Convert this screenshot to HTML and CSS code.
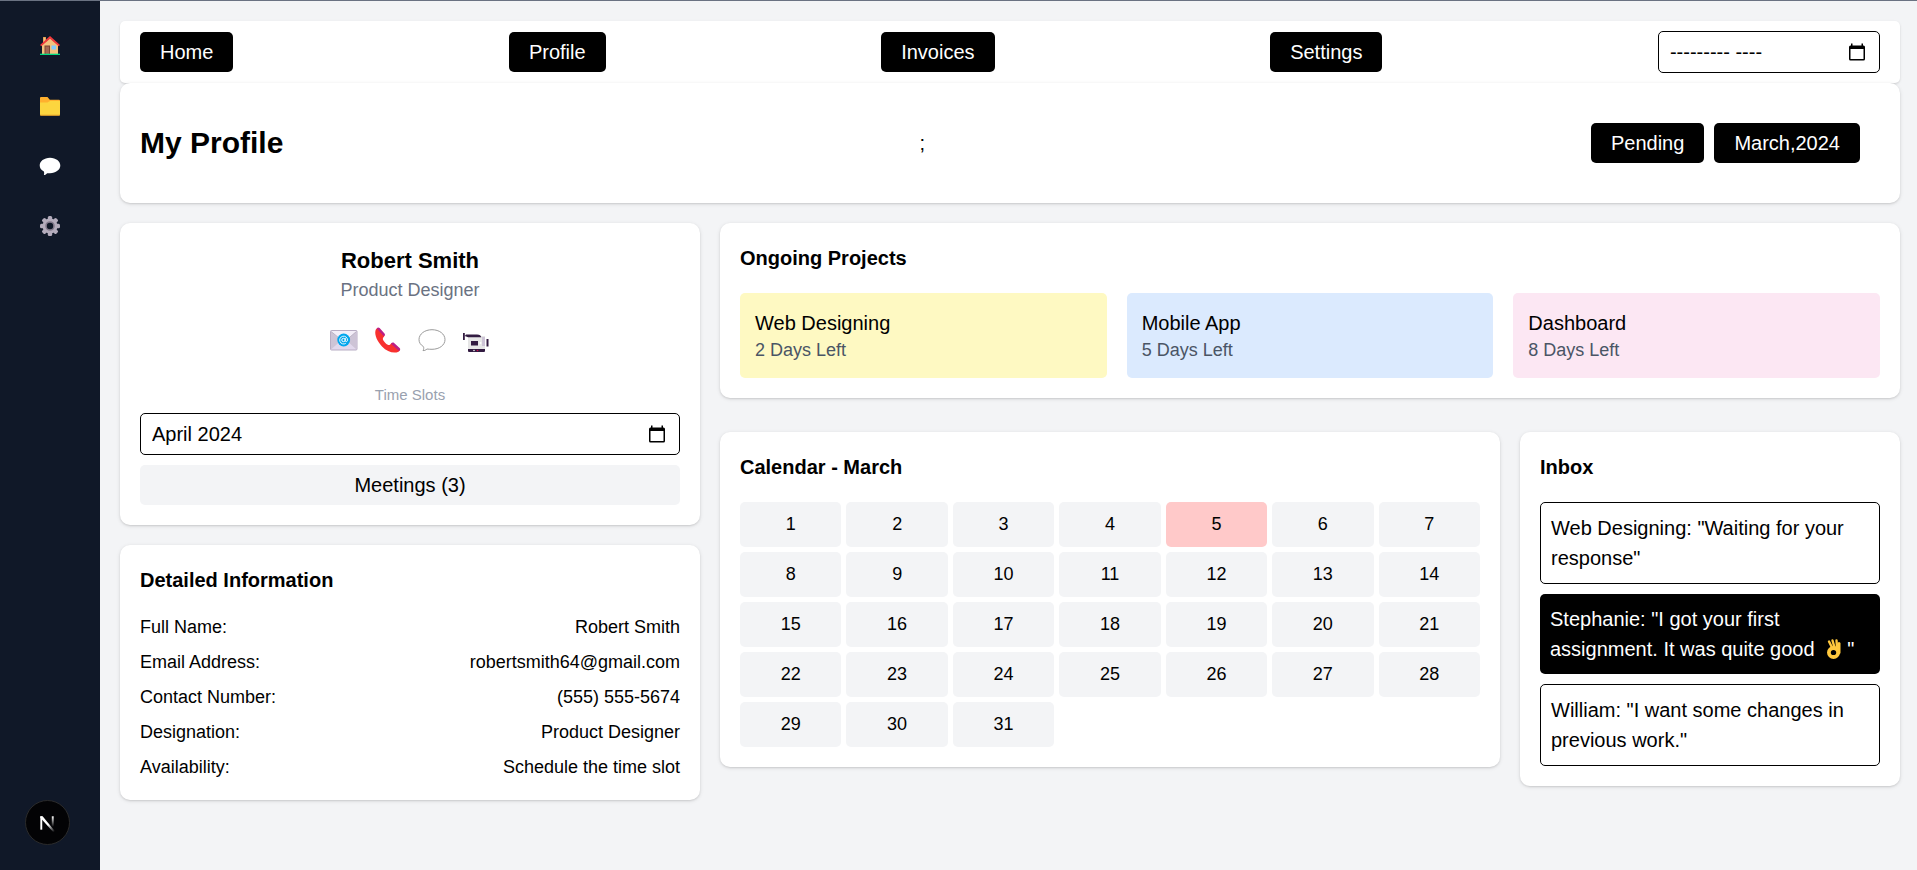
FILE: index.html
```html
<!DOCTYPE html>
<html lang="en">
<head>
<meta charset="utf-8">
<meta name="viewport" content="width=device-width, initial-scale=1">
<title>My Profile</title>
<link rel="stylesheet" href="styles.css">
</head>
<body>
<div class="app">
  <aside class="sidebar">
    <a class="side-link" href="#" aria-label="Home">
      <svg viewBox="0 0 20 20"><path fill="#d3883e" d="M3 1h3v6H3z"/><path fill="#f3c27e" d="M3.500 1.500h2V8h-2zM2 9l8-7 8 7v9H2z"/><path fill="#f23a3c" d="M10 0l10 9-1.300 1.300L10 2.800 1.300 10.300 0 9z"/><path fill="#7d4533" d="M4.500 9.500H10V18H4.500z"/><path fill="#a56953" d="M5.500 10.500H9V18H5.500z"/><path fill="#83cbff" d="M11.500 9.500H16v4h-4.500z"/><path fill="#00dc82" d="M0 17.700h20v1.300H0z"/></svg>
    </a>
    <a class="side-link" href="#" aria-label="Projects">
      <svg viewBox="0 0 20 20"><path fill="#ffb02e" d="M0 2a1 1 0 0 1 1-1h6.500L9.800 3.800H19a1 1 0 0 1 1 1V8H0z"/><path fill="#fcd53f" d="M0 6.500h7.500L10 5h10v13.500a1 1 0 0 1-1 1H1a1 1 0 0 1-1-1z"/><path fill="#e09a28" d="M0 18.800h20v.2a1 1 0 0 1-1 .7H1a1 1 0 0 1-1-.7z"/></svg>
    </a>
    <a class="side-link" href="#" aria-label="Messages">
      <svg viewBox="0 0 20 20"><path fill="#fff" d="M10 1.800c6 0 10.300 3.700 10.300 7.700S16 17.200 10 17.200H7.200C6 18.500 4.800 19 3.900 19c.4-1 .3-2.300 0-3.400C1.200 14-.3 12-.3 9.500-.3 5.500 4 1.800 10 1.800z"/></svg>
    </a>
    <a class="side-link" href="#" aria-label="Settings">
      <svg viewBox="0 0 20 20"><g fill="#b4acbc"><rect x="7.800" y="0" width="4.400" height="20" rx="1.500"/><rect x="7.800" y="0" width="4.400" height="20" rx="1.500" transform="rotate(45 10 10)"/><rect x="7.800" y="0" width="4.400" height="20" rx="1.500" transform="rotate(90 10 10)"/><rect x="7.800" y="0" width="4.400" height="20" rx="1.500" transform="rotate(135 10 10)"/><circle cx="10" cy="10" r="7.500"/></g><circle cx="10" cy="10" r="4" fill="#101828" stroke="#837a8c" stroke-width="1.600"/></svg>
    </a>
  </aside>

  <main class="main">
    <nav class="topnav">
      <button class="btn" type="button">Home</button>
      <button class="btn" type="button">Profile</button>
      <button class="btn" type="button">Invoices</button>
      <button class="btn" type="button">Settings</button>
      <div class="month month-nav">
        <input class="month-input" type="text" aria-label="Month" value="--------- ----">
        <button class="month-picker" type="button" aria-label="Show month picker"><svg viewBox="0 0 20 20"><path d="M15 3.500h1.500A1.500 1.500 0 0 1 18 5v12a1.500 1.500 0 0 1-1.500 1.500h-13A1.500 1.500 0 0 1 2 17V5a1.500 1.500 0 0 1 1.500-1.500H4V1.500h1.500v2h9v-2H16v2zM3.500 7v10h13V7z"/></svg></button>
      </div>
    </nav>

    <header class="card header">
      <h1 class="title">My Profile</h1>
      <span>;</span>
      <div class="header-actions">
        <button class="btn" type="button">Pending</button>
        <button class="btn" type="button">March,2024</button>
      </div>
    </header>

    <div class="columns">
      <div class="left">
        <section class="card profile">
          <h2 class="name">Robert Smith</h2>
          <p class="role">Product Designer</p>
          <div class="contacts">
            <a href="#" aria-label="Email"><svg viewBox="0 0 28 28"><rect x=".5" y="4.500" width="26.500" height="19.500" rx="1" fill="#e1d8ec" stroke="#b8adc4"/><path fill="#cdc4d6" d="M1 5.500l10 9L1 23.500zM26.500 5.500l-10 9 10 9z"/><path fill="#f3eef8" d="M1 5h25.500L14 16z"/><path fill="none" stroke="#b4acbc" stroke-width=".8" d="M1 5.500L14 16 26.500 5.500"/><circle cx="13.700" cy="14" r="6.400" fill="#00a6ed"/><g fill="none" stroke="#fff"><circle cx="13.500" cy="14" r="1.700"/><path d="M15.300 12v2.700c0 1.400 2.200 1.300 2.200-.7a3.900 3.900 0 1 0-1.700 3.300" stroke-width=".9"/></g></svg></a>
            <a href="#" aria-label="Phone"><svg viewBox="0 0 28 28"><path fill="#f8312f" d="M1.500 4.500C2 2.500 3.300 2 4.200 2.400l6 6.800c.4 1-.6 2-1.200 2.700-.7 1 .6 3.200 2.400 5s3.500 2.400 4.500 1.800c1-.7 1.500-1.900 2.600-1.600l7 6.300c.5 1.500-1 2.600-3 3-4.500.9-10-1.400-14.500-6S.3 9 1.500 4.500z"/><path fill="#ba1f87" d="M2.700 2.500c.8-1.300 2-1.300 2.900-.4l4.900 5.300c.8.900.6 2-.6 2.800zM17 17.800c.8-1.300 2-1.800 3.100-.9l5.500 5c1 1 .7 2.300-.5 3.200z"/></svg></a>
            <a href="#" aria-label="Chat"><svg viewBox="0 0 28 28"><path fill="#fff" stroke="#9b9b9b" d="M14 3.700c7.300 0 13 4.300 13 9.900s-5.700 9.700-13 9.700c-2 0-3.600-.1-5-.3-1.200 1.100-2.500 1.600-4 1.600.8-1.400.9-2.700.5-3.900C2.500 18.800 1 16.400 1 13.600 1 8 6.700 3.700 14 3.700z"/></svg></a>
            <a href="#" aria-label="Video"><svg viewBox="0 0 28 28"><path fill="#e6e6e6" d="M6 10h17v14H6z"/><path fill="#cdc4d6" d="M20 11h3v9h-3z"/><path fill="#321b41" d="M1 7h1.800v7H1zM4 8.500h11c3 0 3.800 1.200 4.300 2.800H6L2.800 10zM9 15h7v4.500H9zM24.500 13h2v7.500h-2zM6 23h17v2a1 1 0 0 1-1 1H7a1 1 0 0 1-1-1z"/><circle cx="18.500" cy="17" r="1" fill="#fff"/><circle cx="12" cy="24.500" r=".8" fill="#f4f4f4"/><circle cx="15.500" cy="24.500" r=".8" fill="#ca0b4a"/></svg></a>
          </div>
          <label class="slots-label" for="slots">Time Slots</label>
          <div class="month">
            <input class="month-input" id="slots" type="text" value="April 2024">
            <button class="month-picker" type="button" aria-label="Show month picker"><svg viewBox="0 0 20 20"><path d="M15 3.500h1.500A1.500 1.500 0 0 1 18 5v12a1.500 1.500 0 0 1-1.500 1.500h-13A1.500 1.500 0 0 1 2 17V5a1.500 1.500 0 0 1 1.500-1.500H4V1.500h1.500v2h9v-2H16v2zM3.500 7v10h13V7z"/></svg></button>
          </div>
          <button class="meetings" type="button">Meetings (3)</button>
        </section>

        <section class="card">
          <h3 class="heading">Detailed Information</h3>
          <dl class="details">
            <div class="detail"><dt>Full Name:</dt><dd>Robert Smith</dd></div>
            <div class="detail"><dt>Email Address:</dt><dd>robertsmith64@gmail.com</dd></div>
            <div class="detail"><dt>Contact Number:</dt><dd>(555) 555-5674</dd></div>
            <div class="detail"><dt>Designation:</dt><dd>Product Designer</dd></div>
            <div class="detail"><dt>Availability:</dt><dd>Schedule the time slot</dd></div>
          </dl>
        </section>
      </div>

      <div class="right">
        <section class="card">
          <h3 class="heading">Ongoing Projects</h3>
          <div class="projects">
            <div class="project yellow"><p>Web Designing</p><p class="due">2 Days Left</p></div>
            <div class="project blue"><p>Mobile App</p><p class="due">5 Days Left</p></div>
            <div class="project pink"><p>Dashboard</p><p class="due">8 Days Left</p></div>
          </div>
        </section>

        <div class="lower">
          <section class="card calendar">
            <h3 class="heading">Calendar - March</h3>
            <div class="days">
              <div class="day">1</div><div class="day">2</div><div class="day">3</div><div class="day">4</div><div class="day marked">5</div><div class="day">6</div><div class="day">7</div>
              <div class="day">8</div><div class="day">9</div><div class="day">10</div><div class="day">11</div><div class="day">12</div><div class="day">13</div><div class="day">14</div>
              <div class="day">15</div><div class="day">16</div><div class="day">17</div><div class="day">18</div><div class="day">19</div><div class="day">20</div><div class="day">21</div>
              <div class="day">22</div><div class="day">23</div><div class="day">24</div><div class="day">25</div><div class="day">26</div><div class="day">27</div><div class="day">28</div>
              <div class="day">29</div><div class="day">30</div><div class="day">31</div>
            </div>
          </section>

          <section class="card">
            <h3 class="heading">Inbox</h3>
            <div class="messages">
              <p class="message">Web Designing: "Waiting for your response"</p>
              <p class="message active">Stephanie: "I got your first assignment. It was quite good <svg class="ok-hand" viewBox="0 0 27 20" role="img" aria-label="OK hand"><g fill="none" stroke="#ffc83d" stroke-linecap="round"><path stroke-width="2.400" d="M9 2.500l3 6M12.500 1.500l2 7M16.500 1.500l.5 7"/><path stroke-width="3" d="M19 4.500v9"/><ellipse cx="13.500" cy="13.500" rx="4.600" ry="4.500" stroke-width="3.800"/></g></svg>"</p>
              <p class="message">William: "I want some changes in previous work."</p>
            </div>
          </section>
        </div>
      </div>
    </div>
  </main>
</div>

<button class="dev-badge" type="button" aria-label="Developer tools">
  <svg viewBox="0 0 45 45" fill="none">
    <defs>
      <linearGradient id="diag" x1="24" y1="24" x2="30" y2="32" gradientUnits="userSpaceOnUse"><stop stop-color="#fff"/><stop offset="1" stop-color="#fff" stop-opacity="0"/></linearGradient>
      <linearGradient id="stem" x1="28" y1="16" x2="28" y2="27" gradientUnits="userSpaceOnUse"><stop stop-color="#fff"/><stop offset="1" stop-color="#fff" stop-opacity="0"/></linearGradient>
    </defs>
    <path fill="#fff" d="M15 16h2v14h-2z"/>
    <path fill="url(#diag)" d="M15 16h2.400L30.500 32l-1.600 1L15 17.500z"/>
    <path fill="url(#stem)" d="M27 16h2v11h-2z"/>
  </svg>
</button>
</body>
</html>
```
FILE: styles.css
```css
* {
  box-sizing: border-box;
  margin: 0;
  padding: 0;
}

body {
  background: #f3f4f6;
  color: #000;
  font: 20px/30px "Liberation Sans", Arial, sans-serif;
}

button,
input {
  font: inherit;
  color: inherit;
}

.app {
  display: flex;
  min-height: 100vh;
  border-top: 1px solid #6a7282;
}

.sidebar {
  display: flex;
  flex-direction: column;
  align-items: center;
  flex: none;
  gap: 40px;
  width: 100px;
  padding-top: 35px;
  background: #101828;
}

.side-link svg {
  display: block;
  width: 20px;
  height: 20px;
  overflow: visible;
}

.main {
  flex: 1;
  min-width: 0;
  padding: 20px 17px 20px 20px;
}

.topnav {
  display: flex;
  align-items: center;
  justify-content: space-between;
  padding: 10px 20px;
  border-radius: 5px;
  background: #fff;
  box-shadow: 0 1px 3px rgba(0, 0, 0, 0.1), 0 1px 2px rgba(0, 0, 0, 0.06);
}

.btn {
  padding: 5px 20px;
  border: 0;
  border-radius: 5px;
  background: #000;
  color: #fff;
}

.month {
  display: flex;
  align-items: center;
  padding: 5px 12px 5px 11px;
  border: 1px solid #000;
  border-radius: 5px;
  background: #fff;
}

.month-nav {
  width: 222px;
}

.month-input {
  flex: 1;
  min-width: 0;
  height: 30px;
  border: 0;
  outline: 0;
  background: none;
}

.month-picker {
  flex: none;
  border: 0;
  background: none;
}

.month-picker svg {
  display: block;
  width: 20px;
  height: 20px;
}

.card {
  padding: 20px;
  border-radius: 10px;
  background: #fff;
  box-shadow: 0 1px 4px rgba(0, 0, 0, 0.1), 0 1px 2px rgba(0, 0, 0, 0.1);
}

.header {
  display: flex;
  align-items: center;
  justify-content: space-between;
  padding: 40px 20px;
}

.title {
  font-size: 30px;
  line-height: 40px;
}

.header > span {
  margin-right: 30px;
}

.header-actions {
  display: flex;
  gap: 10px;
  margin-right: 20px;
}

.columns {
  display: grid;
  grid-template-columns: repeat(3, minmax(0, 1fr));
  gap: 20px;
  margin-top: 20px;
}

.left {
  display: flex;
  flex-direction: column;
  gap: 20px;
}

.right {
  display: flex;
  flex-direction: column;
  grid-column: span 2;
  gap: 34px;
}

.profile {
  text-align: center;
}

.name {
  font-size: 22px;
  line-height: 35px;
}

.role {
  color: #6a7282;
  font-size: 18px;
  line-height: 25px;
}

.contacts {
  display: flex;
  justify-content: center;
  gap: 16px;
  margin: 23px 0 31px;
}

.contacts svg {
  display: block;
  width: 28px;
  height: 28px;
}

.slots-label {
  display: block;
  margin-bottom: 8px;
  color: #99a1af;
  font-size: 15px;
  line-height: 20px;
}

.meetings {
  display: block;
  width: 100%;
  margin-top: 10px;
  padding: 5px;
  border: 0;
  border-radius: 5px;
  background: #f3f4f6;
}

.heading {
  margin-bottom: 20px;
  font-size: 20px;
  line-height: 30px;
}

.details {
  display: flex;
  flex-direction: column;
  gap: 10px;
  font-size: 18px;
  line-height: 25px;
}

.detail {
  display: flex;
  justify-content: space-between;
}

.projects {
  display: grid;
  grid-template-columns: repeat(3, minmax(0, 1fr));
  gap: 20px;
}

.project {
  padding: 15px;
  border-radius: 5px;
}

.due {
  color: #4a5565;
  font-size: 18px;
  line-height: 25px;
}

.yellow {
  background: #fef9c2;
}

.blue {
  background: #dbeafe;
}

.pink {
  background: #fce7f3;
}

.lower {
  display: grid;
  grid-template-columns: repeat(3, minmax(0, 1fr));
  align-items: start;
  gap: 20px;
}

.calendar {
  grid-column: span 2;
}

.days {
  display: grid;
  grid-template-columns: repeat(7, minmax(0, 1fr));
  gap: 5px;
}

.day {
  padding: 10px;
  border-radius: 5px;
  background: #f3f4f6;
  font-size: 18px;
  line-height: 25px;
  text-align: center;
}

.marked {
  background: #ffc9c9;
}

.messages {
  display: flex;
  flex-direction: column;
  gap: 10px;
}

.message {
  padding: 10px;
  border: 1px solid #000;
  border-radius: 5px;
}

.active {
  border: 0;
  background: #000;
  color: #fff;
}

.ok-hand {
  width: 27px;
  height: 20px;
  vertical-align: -3px;
}

.dev-badge {
  position: fixed;
  bottom: 25px;
  left: 25px;
  width: 45px;
  height: 45px;
  border: 1px solid #2b2b2b;
  border-radius: 50%;
  background: #030305;
}

.dev-badge svg {
  display: block;
  width: 100%;
  height: 100%;
}
```
